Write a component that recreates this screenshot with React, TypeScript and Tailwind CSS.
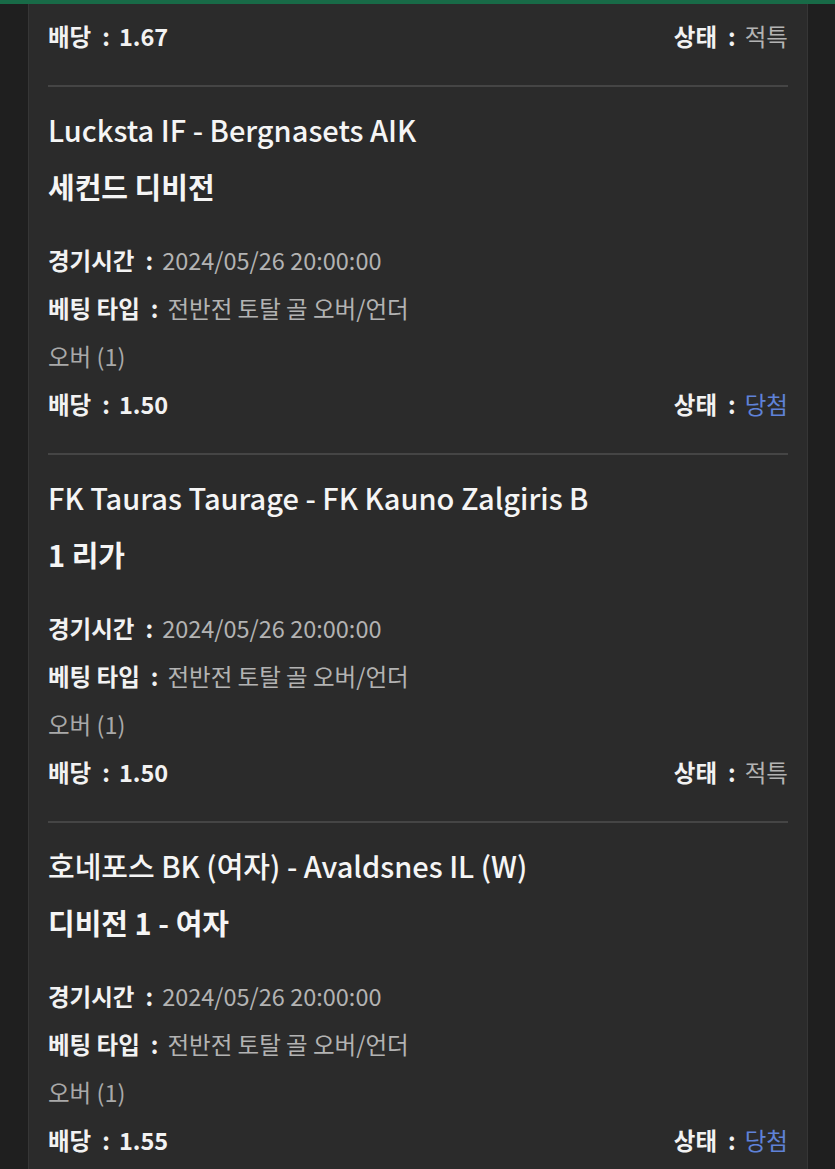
import React from "react";

type Item = {
  title: string;
  league: string;
  time: string;
  type: string;
  pick: string;
  odds: string;
  status: "적특" | "당첨";
};

const items: Item[] = [
  {
    title: "Lucksta IF - Bergnasets AIK",
    league: "세컨드 디비전",
    time: "2024/05/26 20:00:00",
    type: "전반전 토탈 골 오버/언더",
    pick: "오버 (1)",
    odds: "1.50",
    status: "당첨",
  },
  {
    title: "FK Tauras Taurage - FK Kauno Zalgiris B",
    league: "1 리가",
    time: "2024/05/26 20:00:00",
    type: "전반전 토탈 골 오버/언더",
    pick: "오버 (1)",
    odds: "1.50",
    status: "적특",
  },
  {
    title: "호네포스 BK (여자) - Avaldsnes IL (W)",
    league: "디비전 1 - 여자",
    time: "2024/05/26 20:00:00",
    type: "전반전 토탈 골 오버/언더",
    pick: "오버 (1)",
    odds: "1.55",
    status: "당첨",
  },
];

function Colon() {
  return <span className="ml-[11px] mr-[9px] font-bold text-[#f2f2f2]">:</span>;
}

function OddsRow({ odds, status }: { odds: string; status: string }) {
  return (
    <div className="flex h-[48px] items-center justify-between">
      <div className="flex items-center font-bold text-[#f2f2f2]">
        <span>배당</span>
        <Colon />
        <span>{odds}</span>
      </div>
      <div className="flex items-center">
        <span className="font-bold text-[#f2f2f2]">상태</span>
        <Colon />
        <span className={status === "당첨" ? "text-[#5f82d8]" : "text-[#b3b3b3]"}>{status}</span>
      </div>
    </div>
  );
}

export default function App() {
  return (
    <div
      className="min-h-[1169px] w-[835px] bg-[#1f1f1f] text-[23.5px]"
      style={{ fontFamily: '"Noto Sans CJK KR", "Noto Sans", sans-serif' }}
    >
      <div className="h-[4px] bg-[#186a47]" />
      <div className="mx-[28px] w-[780px] border-x border-[#363636] bg-[#2b2b2b] px-[19px]">
        <div className="pt-[9px] pb-[24px]">
          <OddsRow odds="1.67" status="적특" />
        </div>
        {items.map((it, i) => (
          <div key={i}>
            <div className="h-[2px] bg-[#454545]" />
            <div className="pt-[14px] pb-[24px]">
              <div className="flex h-[57px] items-center text-[29px] font-medium text-[#f5f5f5]">
                {it.title}
              </div>
              <div className="flex h-[57px] items-center text-[29px] font-bold text-[#f5f5f5]">
                {it.league}
              </div>
              <div className="mt-[22px]">
                <div className="flex h-[48px] items-center">
                  <span className="font-bold text-[#f2f2f2]">경기시간</span>
                  <Colon />
                  <span className="text-[#b3b3b3]">{it.time}</span>
                </div>
                <div className="flex h-[48px] items-center">
                  <span className="font-bold text-[#f2f2f2]">베팅 타입</span>
                  <Colon />
                  <span className="text-[#b3b3b3]">{it.type}</span>
                </div>
                <div className="flex h-[48px] items-center text-[#a9a9a9]">{it.pick}</div>
                <OddsRow odds={it.odds} status={it.status} />
              </div>
            </div>
          </div>
        ))}
      </div>
    </div>
  );
}
